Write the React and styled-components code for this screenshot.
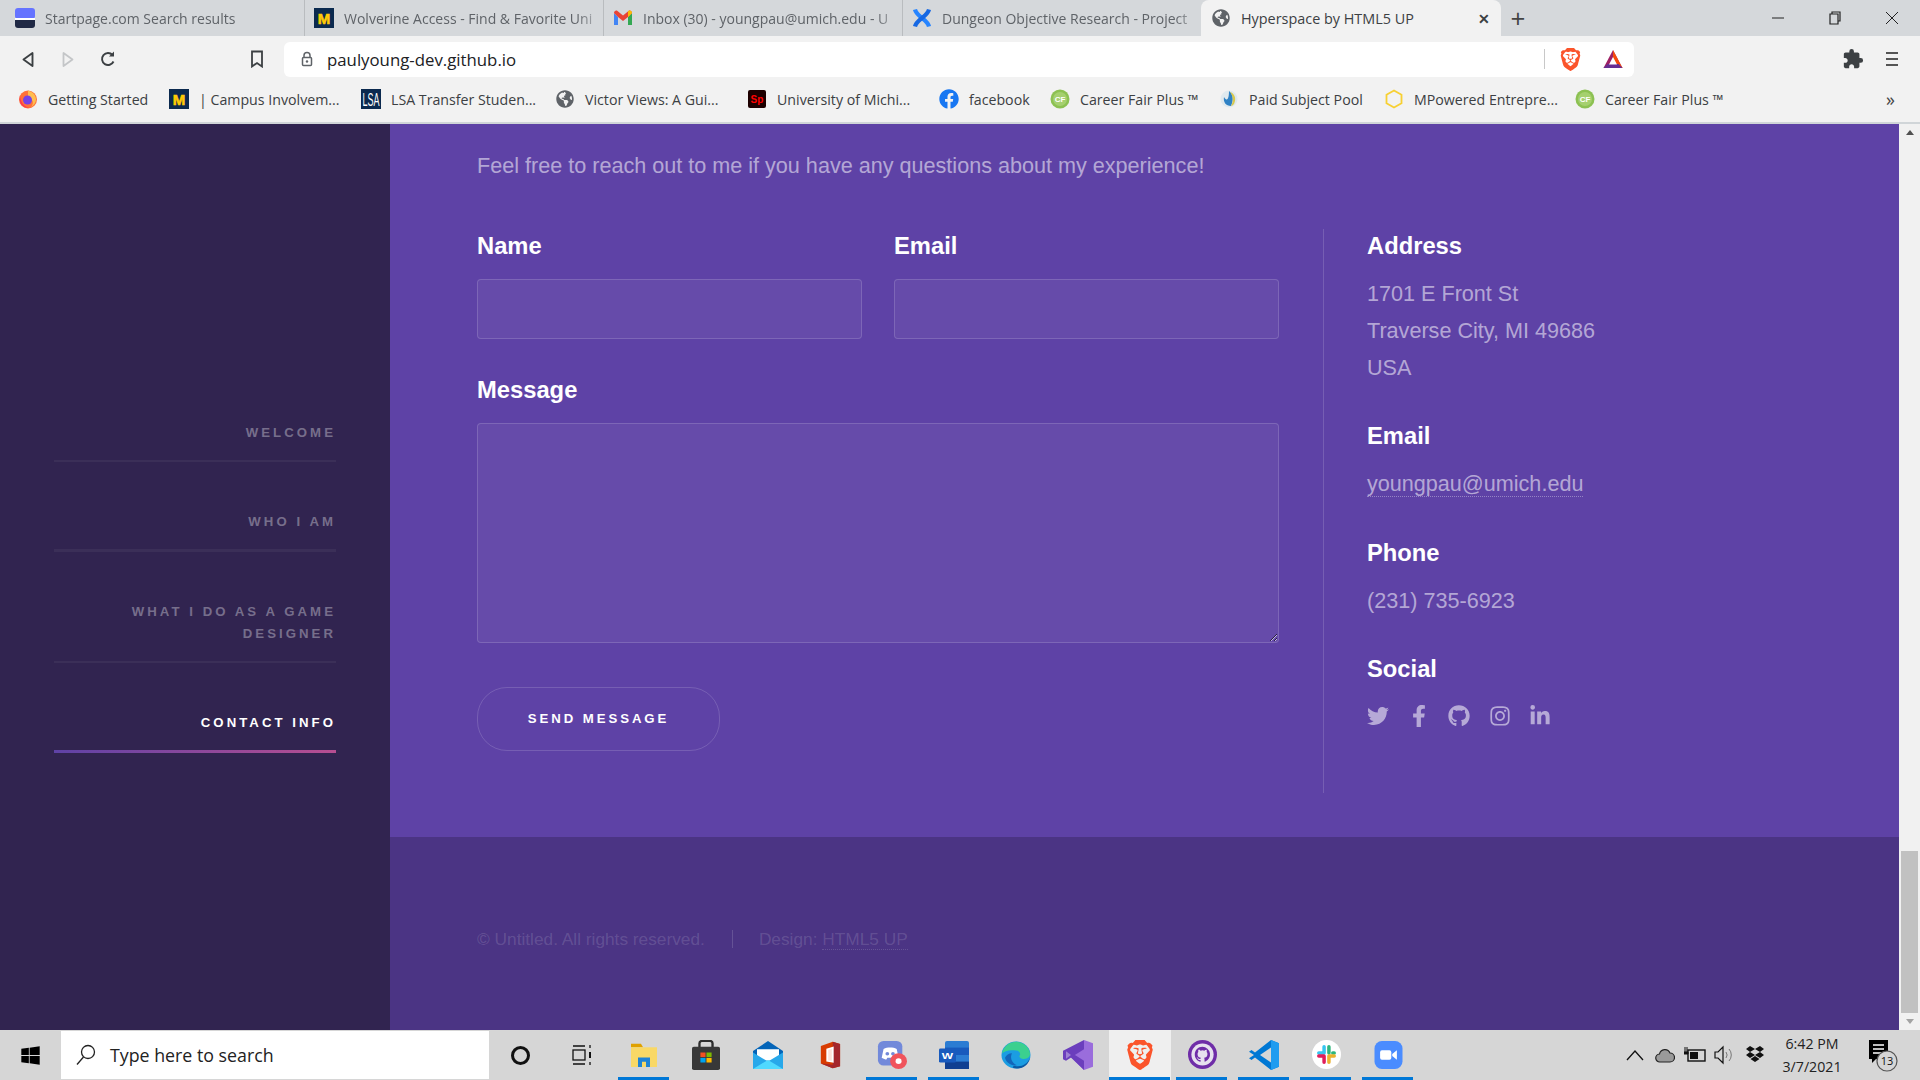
import React from 'react';
import styled, { createGlobalStyle } from 'styled-components';
import {
  FaTwitter,
  FaFacebookF,
  FaGithub,
  FaInstagram,
  FaLinkedinIn,
  FaGlobeAmericas,
  FaFacebook,
  FaWindows,
} from 'react-icons/fa';
import { MdExtension } from 'react-icons/md';
import { SiBrave } from 'react-icons/si';

const UI_FONT = '"Open Sans", "Noto Sans", "Liberation Sans", sans-serif';
const PAGE_FONT = '"Liberation Sans", Arial, sans-serif';

const GlobalStyle = createGlobalStyle`
  html, body {
    margin: 0;
    padding: 0;
    width: 1920px;
    height: 1080px;
    overflow: hidden;
    background: #5e42a6;
    font-family: ${PAGE_FONT};
  }
  * { box-sizing: border-box; }
`;

// favicons and logos
const StartpageIcon = () => (
  <svg width="20" height="20" viewBox="0 0 20 20">
    <rect width="20" height="11" rx="3" fill="#6573ff" />
    <rect y="10" width="20" height="2" fill="#fff" />
    <path d="M0 12h20v5a3 3 0 0 1-3 3H3a3 3 0 0 1-3-3z" fill="#202945" />
  </svg>
);

const MichiganIcon = () => (
  <svg width="20" height="20" viewBox="0 0 20 20">
    <rect width="20" height="20" fill="#0b2a4f" />
    <text x="10" y="15.5" textAnchor="middle" fontFamily="Liberation Sans" fontWeight="700" fontSize="15" stroke="#ffcb05" strokeWidth="0.6" fill="#ffcb05">M</text>
  </svg>
);

const GmailIcon = () => (
  <svg width="20" height="20" viewBox="0 0 20 20">
    <path d="M1 5v12h4V9z" fill="#4285f4" />
    <path d="M15 9v8h4V5z" fill="#34a853" />
    <path d="M1 5c0-2 2-3 3.5-2L10 7.5 15.5 3C17 2 19 3 19 5l-4 4-5 4-5-4z" fill="#ea4335" />
    <path d="M15 9l4-4c0-2-2-3-3.5-2L15 3.5z" fill="#fbbc04" />
  </svg>
);

const ConfluenceIcon = () => (
  <svg width="20" height="20" viewBox="0 0 20 20">
    <g fill="none" strokeWidth="4.2">
      <path d="M3 1.5c1 4 4 6 7 8.500s6 4.5 7 8.5" stroke="#2684ff" />
      <path d="M17 1.5c-1 4-4 6-7 8.500s-6 4.5-7 8.5" stroke="#1668e3" />
    </g>
  </svg>
);

const FirefoxIcon = () => (
  <svg width="20" height="20" viewBox="0 0 20 20">
    <circle cx="10" cy="10.5" r="9" fill="#ff7139" />
    <path d="M10 1.5c4 1 8 4 8 9 0 3-2 6-5 7.5 2-2 2.5-5 1-7-1-1.5-3-2.5-4-4z" fill="#ffbd4f" />
    <circle cx="9.5" cy="11" r="4.5" fill="#7542e5" />
    <path d="M2 6c0 5 3 12 9 12.5-4 1-9-2-9.5-8z" fill="#ff3750" />
  </svg>
);

const LsaIcon = () => (
  <svg width="20" height="20" viewBox="0 0 20 20">
    <rect width="20" height="20" fill="#0b2a4f" />
    <text x="10" y="17" textAnchor="middle" fontFamily="Liberation Sans" fontSize="18" textLength="17" lengthAdjust="spacingAndGlyphs" fill="#fff">LSA</text>
  </svg>
);

const AdobeIcon = () => (
  <svg width="20" height="20" viewBox="0 0 20 20">
    <rect width="18" height="18" x="1" y="1" rx="2" fill="#1d0000" />
    <text x="10" y="14" textAnchor="middle" fontFamily="Liberation Sans" fontWeight="700" fontSize="10" fill="#f00">Sp</text>
  </svg>
);

const CareerIcon = () => (
  <svg width="20" height="20" viewBox="0 0 20 20">
    <circle cx="10" cy="10" r="9.5" fill="#8cc152" />
    <circle cx="10" cy="10" r="7" fill="#a5d06f" />
    <text x="10" y="13" textAnchor="middle" fontFamily="Liberation Sans" fontWeight="700" fontSize="8" fill="#fff">CF</text>
  </svg>
);

const PoolIcon = () => (
  <svg width="20" height="20" viewBox="0 0 20 20">
    <circle cx="10" cy="10" r="8.5" fill="#dfe9ee" />
    <path d="M10 2c4 3 5 8 2 15-5 0-8-4-7-9 2 4 5 4 5-6z" fill="#2f82c5" />
    <path d="M11 3c4 1 7 6 4 12-1 1-2 2-3 2 3-5 2-10-1-14z" fill="#d8c94e" />
  </svg>
);

const HexIcon = () => (
  <svg width="20" height="20" viewBox="0 0 20 20">
    <path d="M10 1.5l7.5 4.3v8.400L10 18.5l-7.5-4.3V5.8z" fill="none" stroke="#f7d033" strokeWidth="1.8" />
  </svg>
);

const BatIcon = () => (
  <svg width="22" height="20" viewBox="0 0 22 20">
    <path d="M11 1l9.5 18H1.5z" fill="#9e1f63" />
    <path d="M11 1l9.5 18h-5L11 9.5z" fill="#ff5000" opacity="0.9" />
    <path d="M1.5 19l4-4h11l4 4z" fill="#662d91" />
    <path d="M11 8l4 7.5H7z" fill="#fff" />
  </svg>
);

const BackIcon = () => (
  <svg width="12" height="17" viewBox="0 0 12 16">
    <path d="M10.5 1.5v13L1.5 8z" fill="none" stroke="#3c4043" strokeWidth="1.9" strokeLinejoin="round" />
  </svg>
);

const ForwardIcon = () => (
  <svg width="12" height="17" viewBox="0 0 12 16">
    <path d="M1.5 1.5v13L10.5 8z" fill="none" stroke="#c4c6c8" strokeWidth="1.8" strokeLinejoin="round" />
  </svg>
);

const ReloadIcon = () => (
  <svg width="18" height="18" viewBox="0 0 18 18">
    <path d="M14.5 11.500A6 6 0 1 1 13.5 5" fill="none" stroke="#3c4043" strokeWidth="1.9" />
    <path d="M15 1.5v5h-5z" fill="#3c4043" />
  </svg>
);

const BookmarkIcon = () => (
  <svg width="14" height="18" viewBox="0 0 14 18">
    <path d="M2 1.5h10v15l-5-3.5-5 3.5z" fill="none" stroke="#3c4043" strokeWidth="1.8" />
  </svg>
);

const LockIcon = () => (
  <svg width="12" height="16" viewBox="0 0 12 16">
    <path d="M3 7V4.5a3 3 0 0 1 6 0V7" fill="none" stroke="#5f6368" strokeWidth="1.5" />
    <rect x="1.5" y="6.5" width="9" height="8" rx="1" fill="none" stroke="#5f6368" strokeWidth="1.5" />
    <circle cx="6" cy="10.5" r="1.2" fill="#5f6368" />
  </svg>
);

const FolderIcon = () => (
  <svg width="28" height="24" viewBox="0 0 28 28" preserveAspectRatio="none">
    <path d="M1 1h10l2 4H1z" fill="#e0a100" />
    <rect x="1" y="5" width="26" height="23" fill="#f9d866" />
    <path d="M8 28v-11h12v11h-4v-6h-4v6z" fill="#1f83d6" />
  </svg>
);

const StoreIcon = () => (
  <svg width="28" height="30" viewBox="0 0 30 36" preserveAspectRatio="none">
    <path d="M8 9V4a3 3 0 0 1 3-3h8a3 3 0 0 1 3 3v5" fill="none" stroke="#2d2d2d" strokeWidth="2.5" />
    <rect y="8" width="30" height="28" rx="2" fill="#383838" />
    <rect x="9" y="15" width="5.5" height="5.5" fill="#f25022" />
    <rect x="15.5" y="15" width="5.5" height="5.5" fill="#7fba00" />
    <rect x="9" y="21.5" width="5.5" height="5.5" fill="#00a4ef" />
    <rect x="15.5" y="21.5" width="5.5" height="5.5" fill="#ffb900" />
  </svg>
);

const MailIcon = () => (
  <svg width="30" height="28" viewBox="0 0 30 34" preserveAspectRatio="none">
    <path d="M15 0l15 12v22H0V12z" fill="#0364b8" />
    <path d="M4 10h22v14H4z" fill="#fff" />
    <path d="M0 14l15 11 15-11v20H0z" fill="#28a8ea" />
    <path d="M0 34l15-11 15 11z" fill="#50d9ff" />
  </svg>
);

const OfficeIcon = () => (
  <svg width="22" height="28" viewBox="0 0 24 36" preserveAspectRatio="none">
    <path d="M15 1L2 6.5v22.500l13 6 8-2.5V4z" fill="#d83b01" />
    <path d="M15 1l8 3v28.500L15 35l-13-6 13 1.5z" fill="#a4262c" />
    <path d="M8 10l8-3v21l-8-1.5z" fill="#fff" />
    <path d="M10 11.5l4-1.5v15.5l-4-.5z" fill="#eb3c00" opacity="0.15" />
  </svg>
);

const WordIcon = () => (
  <svg width="30" height="28" viewBox="0 0 30 34" preserveAspectRatio="none">
    <rect x="6" width="24" height="34" rx="2" fill="#2b7cd3" />
    <rect x="6" y="8" width="24" height="9" fill="#185abd" />
    <rect x="6" y="25" width="24" height="9" fill="#103f91" />
    <rect y="9" width="17" height="17" rx="1.5" fill="#185abd" />
    <text x="8.5" y="22" textAnchor="middle" fontFamily="Liberation Sans" fontWeight="700" fontSize="12" fill="#fff">W</text>
  </svg>
);

const EdgeIcon = () => (
  <svg width="30" height="28" viewBox="0 0 30 30" preserveAspectRatio="none">
    <circle cx="15" cy="15" r="14.5" fill="#1b9de2" />
    <path d="M1 13C3 4 11 0 17 1c7 1 12 7 12 13 0 4-4 6-8 5-3-1-3-3-2-4 1-3-3-6-8-5-5 0-8 2-10 3z" fill="#3bd08f" />
    <path d="M29 18c-1 7-7 12-13 11.5-6 0-4-2-3-3 7 2 13-1 16-8.5z" fill="#0c59a4" />
    <path d="M11 13c-2 4-1 10 5 13-6 1-11-3-12-8 1-3 4-5 7-5z" fill="#1366ba" />
  </svg>
);

const VisualStudioIcon = () => (
  <svg width="30" height="30" viewBox="0 0 30 36" preserveAspectRatio="none">
    <path d="M21 0l9 4v28l-9 4L8 21l13-11z" fill="#9a6ddc" />
    <path d="M21 0v36L8 21l-5 4-3-2V13l3-2 18 14V11L3 25V11z" fill="#6b3ebd" />
    <path d="M3 13.5L8 18l-5 4.5z" fill="#fff" opacity="0.35" />
  </svg>
);

const GithubDesktopIcon = () => (
  <svg width="29" height="29" viewBox="0 0 30 30">
    <circle cx="15" cy="15" r="15" fill="#6f2da8" />
    <circle cx="15" cy="15" r="11.5" fill="#e7e1ef" />
    <path d="M15 7c-4.5 0-8 3.5-8 8 0 3.5 2.3 6.5 5.5 7.6.4 0 .5-.2.5-.4v-1.5c-2.200.5-2.700-1-2.700-1-.4-.9-.9-1.200-.9-1.200-.7-.5 0-.5 0-.5.8 0 1.200.8 1.200.8.700 1.200 1.900.9 2.400.7 0-.5.3-.9.5-1.100-1.800-.2-3.600-.9-3.600-4 0-.9.3-1.600.8-2.100 0-.2-.4-1 .1-2.100 0 0 .7-.2 2.200.8a7.600 7.600 0 0 1 4 0c1.500-1 2.200-.8 2.200-.8.5 1.100.1 1.900.1 2.100.5.5.8 1.200.8 2.100 0 3.100-1.800 3.800-3.600 4 .3.3.6.8.6 1.5v2.200c0 .2.1.5.5.4A8 8 0 0 0 15 7z" fill="#6f2da8" />
  </svg>
);

const VscodeIcon = () => (
  <svg width="30" height="30" viewBox="0 0 30 36" preserveAspectRatio="none">
    <path d="M22 0l8 4v28l-8 4L6 21l-3.5 3L0 22l5-4-5-4 2.5-2L6 15z" fill="#0078d4" />
    <path d="M22 0l8 4v28l-8 4z" fill="#1f9cf0" />
    <path d="M22 9v18l-11-9z" fill="#d6d6d6" />
  </svg>
);

const SlackIcon = () => (
  <svg width="29" height="29" viewBox="0 0 30 30">
    <circle cx="15" cy="15" r="15" fill="#fff" />
    <g strokeWidth="3.6" strokeLinecap="round" fill="none">
      <path d="M12.5 7v6.5M7 13.5h3.5" stroke="#36c5f0" />
      <path d="M17.5 7v6.5M23 13.5h-1.5" stroke="#2eb67d" />
      <path d="M17.5 23v-6.5M23 16.5h-5.5" stroke="#ecb22e" />
      <path d="M12.5 23v-6.5M7 16.5h5.5" stroke="#e01e5a" />
    </g>
  </svg>
);

const ZoomIcon = () => (
  <svg width="29" height="28" viewBox="0 0 30 30">
    <rect width="30" height="30" rx="8" fill="#4a8cff" />
    <rect x="6" y="10" width="12" height="10" rx="2" fill="#fff" />
    <path d="M19 14l5-4v10l-5-4z" fill="#fff" />
  </svg>
);

const TaskViewIcon = () => (
  <svg width="20" height="20" viewBox="0 0 20 20">
    <g stroke="#111" strokeWidth="1.3" fill="none">
      <path d="M1 1h12M1 19h12" />
      <rect x="1" y="5" width="12" height="10" />
      <path d="M18 0v3M18 17v3" />
    </g>
    <path d="M17 7h2v6h-2z" fill="#111" />
  </svg>
);

const CloudIcon = () => (
  <svg width="20" height="18" viewBox="0 0 20 18">
    <path d="M5 16a4 4 0 0 1-.5-8A5.5 5.5 0 0 1 15 7a4.5 4.5 0 0 1 0 9z" fill="#9a9a9a" stroke="#222" strokeWidth="1.2" />
  </svg>
);

const BatteryIcon = () => (
  <svg width="22" height="18" viewBox="0 0 22 18">
    <rect x="4" y="4" width="17" height="11" fill="none" stroke="#111" strokeWidth="1.4" />
    <rect x="6" y="6" width="8" height="7" fill="#111" />
    <path d="M1 1v5M3 1v5M0 6h4v2H0z" stroke="#111" strokeWidth="1" fill="#111" />
  </svg>
);

const SpeakerIcon = () => (
  <svg width="22" height="22" viewBox="0 0 22 22">
    <path d="M1 8h3l5-5v16l-5-5H1z" fill="none" stroke="#111" strokeWidth="1.2" />
    <path d="M12 8a5 5 0 0 1 0 6M15 5a9 9 0 0 1 0 12" fill="none" stroke="#777" strokeWidth="1" />
  </svg>
);

const DropboxIcon = () => (
  <svg width="20" height="20" viewBox="0 0 20 20">
    <path d="M5 1L1 4l4 3 5-3zM15 1l-5 3 5 3 4-3zM5 7L1 10l4 3 5-3zM15 7l-5 3 5 3 4-3zM5.5 14l4.5 3 4.5-3-4.5-3z" fill="#111" />
  </svg>
);

const NotifyIcon = () => (
  <svg width="32" height="36" viewBox="0 0 32 36">
    <path d="M3 3h19v19H10l-4 4v-4H3z" fill="#000" />
    <path d="M7 8h11M7 12h11M7 16h11" stroke="#fff" strokeWidth="1.4" />
    <circle cx="21" cy="24" r="10" fill="#d6d6d6" stroke="#555" strokeWidth="1.2" />
    <text x="21" y="28" textAnchor="middle" fontFamily="Open Sans" fontSize="11" fill="#111">13</text>
  </svg>
);

const DiscordIcon = () => (
  <svg width="30" height="28" viewBox="0 0 32 32" preserveAspectRatio="none">
    <rect x="1" y="0" width="26" height="28" rx="6" fill="#7289da" />
    <path d="M7 9c4-2 10-2 14 0l2 10c-2 1.5-4 2-5 2l-1-2h-6l-1 2c-1 0-3-.5-5-2z" fill="#fff" />
    <circle cx="11" cy="14.5" r="2" fill="#7289da" />
    <circle cx="17" cy="14.5" r="2" fill="#7289da" />
    <circle cx="23" cy="23" r="9" fill="#f0545c" />
    <circle cx="23" cy="23" r="3.2" fill="#fff" />
  </svg>
);

// data
const TABS = [
  { title: 'Startpage.com Search results', icon: <StartpageIcon /> },
  { title: 'Wolverine Access - Find & Favorite Uni', icon: <MichiganIcon /> },
  { title: 'Inbox (30) - youngpau@umich.edu - U', icon: <GmailIcon /> },
  { title: 'Dungeon Objective Research - Project', icon: <ConfluenceIcon /> },
];

const BOOKMARKS = [
  { label: 'Getting Started', w: 151, icon: <FirefoxIcon /> },
  { label: '| Campus Involvem...', w: 192, icon: <MichiganIcon /> },
  { label: 'LSA Transfer Studen...', w: 194, icon: <LsaIcon /> },
  { label: 'Victor Views: A Gui...', w: 192, icon: <FaGlobeAmericas size={18} color="#5f6368" /> },
  { label: 'University of Michi...', w: 192, icon: <AdobeIcon /> },
  { label: 'facebook', w: 111, icon: <FaFacebook size={20} color="#1877f2" /> },
  { label: 'Career Fair Plus ™', w: 169, icon: <CareerIcon /> },
  { label: 'Paid Subject Pool', w: 165, icon: <PoolIcon /> },
  { label: 'MPowered Entrepre...', w: 191, icon: <HexIcon /> },
  { label: 'Career Fair Plus ™', w: 200, icon: <CareerIcon /> },
];

const NAV_ITEMS = [
  { label: 'Welcome' },
  { label: 'Who I am', thick: true },
  { label: 'What I do as a game designer' },
  { label: 'Contact Info', active: true },
];

const APPS = [
  { icon: <FolderIcon />, open: true },
  { icon: <StoreIcon /> },
  { icon: <MailIcon /> },
  { icon: <OfficeIcon /> },
  { icon: <DiscordIcon />, open: true },
  { icon: <WordIcon />, open: true },
  { icon: <EdgeIcon /> },
  { icon: <VisualStudioIcon /> },
  { icon: <SiBrave size={30} color="#fb542b" />, open: true, active: true },
  { icon: <GithubDesktopIcon />, open: true },
  { icon: <VscodeIcon />, open: true },
  { icon: <SlackIcon />, open: true },
  { icon: <ZoomIcon />, open: true },
];

// App Component
const App = () => {
  return (
    <>
      <GlobalStyle />
      <Screen>
        <TabStrip>
          {TABS.map((tab) => (
            <Tab key={tab.title}>
              <TabIcon>{tab.icon}</TabIcon>
              <TabTitle>{tab.title}</TabTitle>
            </Tab>
          ))}
          <ActiveTab>
            <TabIcon>
              <FaGlobeAmericas size={18} color="#5f6368" />
            </TabIcon>
            <ActiveTitle>Hyperspace by HTML5 UP</ActiveTitle>
            <TabClose>✕</TabClose>
          </ActiveTab>
          <NewTab>+</NewTab>
          <WindowControls>
            <WindowButton>
              <svg width="14" height="14" viewBox="0 0 14 14">
                <path d="M1 7h12" stroke="#222" strokeWidth="1" />
              </svg>
            </WindowButton>
            <WindowButton>
              <svg width="14" height="14" viewBox="0 0 14 14">
                <path d="M4 3V1h8v9h-2M2 3h8v10H2z" fill="none" stroke="#222" strokeWidth="1.2" />
              </svg>
            </WindowButton>
            <WindowButton>
              <svg width="14" height="14" viewBox="0 0 14 14">
                <path d="M1 1l12 12M13 1L1 13" stroke="#222" strokeWidth="1" />
              </svg>
            </WindowButton>
          </WindowControls>
        </TabStrip>

        <Toolbar>
          <ToolButton><BackIcon /></ToolButton>
          <ToolButton><ForwardIcon /></ToolButton>
          <ToolButton><ReloadIcon /></ToolButton>
          <BookmarkButton><BookmarkIcon /></BookmarkButton>
          <Omnibox>
            <LockIcon />
            <Url>paulyoung-dev.github.io</Url>
            <OmniDivider />
            <SiBrave size={23} color="#fb542b" />
            <BatSlot><BatIcon /></BatSlot>
          </Omnibox>
          <ToolEnd>
            <ToolButton><MdExtension size={22} color="#3c4043" /></ToolButton>
            <ToolButton>
              <svg width="14" height="16" viewBox="0 0 14 16">
                <path d="M1 2h12M1 8h12M1 14h12" stroke="#555" strokeWidth="2" />
              </svg>
            </ToolButton>
          </ToolEnd>
        </Toolbar>

        <BookmarkBar>
          {BOOKMARKS.map((item, i) => (
            <Bookmark key={i} $w={item.w}>
              <BookmarkGlyph>{item.icon}</BookmarkGlyph>
              <span>{item.label}</span>
            </Bookmark>
          ))}
          <MoreBookmarks>»</MoreBookmarks>
        </BookmarkBar>

        <Page>
          <Sidebar>
            <Nav>
              {NAV_ITEMS.map((item) => (
                <NavItem key={item.label} $active={item.active} $thick={item.thick}>
                  {item.label}
                </NavItem>
              ))}
            </Nav>
          </Sidebar>

          <Main>
            <Contact>
              <Intro>Feel free to reach out to me if you have any questions about my experience!</Intro>
              <Split>
                <Form>
                  <Fields>
                    <Field>
                      <Label>Name</Label>
                      <Input type="text" />
                    </Field>
                    <Field>
                      <Label>Email</Label>
                      <Input type="text" />
                    </Field>
                    <WideField>
                      <Label>Message</Label>
                      <TextArea />
                    </WideField>
                  </Fields>
                  <SendButton type="button">Send Message</SendButton>
                </Form>
                <Info>
                  <InfoBlock>
                    <Label>Address</Label>
                    <InfoText>
                      1701 E Front St
                      <br />
                      Traverse City, MI 49686
                      <br />
                      USA
                    </InfoText>
                  </InfoBlock>
                  <InfoBlock>
                    <Label>Email</Label>
                    <InfoText>
                      <DottedLink href="#">youngpau@umich.edu</DottedLink>
                    </InfoText>
                  </InfoBlock>
                  <InfoBlock>
                    <Label>Phone</Label>
                    <InfoText>(231) 735-6923</InfoText>
                  </InfoBlock>
                  <InfoBlock>
                    <Label>Social</Label>
                    <Socials>
                      <FaTwitter />
                      <FaFacebookF />
                      <FaGithub />
                      <FaInstagram />
                      <FaLinkedinIn />
                    </Socials>
                  </InfoBlock>
                </Info>
              </Split>
            </Contact>
            <Footer>
              <Copyright>© Untitled. All rights reserved.</Copyright>
              <Credit>
                Design: <FooterLink href="#">HTML5 UP</FooterLink>
              </Credit>
            </Footer>
          </Main>

          <Scrollbar>
            <ScrollArrow $up />
            <ScrollTrack>
              <ScrollThumb />
            </ScrollTrack>
            <ScrollArrow />
          </Scrollbar>
        </Page>

        <Taskbar>
          <StartButton>
            <FaWindows size={21} color="#000" />
          </StartButton>
          <SearchBox>
            <svg width="20" height="22" viewBox="0 0 20 22">
              <circle cx="12" cy="8" r="6.5" fill="none" stroke="#222" strokeWidth="1.3" />
              <path d="M7.5 13L1 20.5" stroke="#222" strokeWidth="1.3" />
            </svg>
            <SearchText>Type here to search</SearchText>
          </SearchBox>
          <SystemCell>
            <CortanaRing />
          </SystemCell>
          <SystemCell>
            <TaskViewIcon />
          </SystemCell>
          {APPS.map((app, i) => (
            <AppCell key={i} $active={app.active} $open={app.open}>
              {app.icon}
            </AppCell>
          ))}
          <Tray>
            <TrayCell>
              <svg width="18" height="12" viewBox="0 0 18 12">
                <path d="M1 11l8-9 8 9" fill="none" stroke="#111" strokeWidth="1.3" />
              </svg>
            </TrayCell>
            <TrayCell><CloudIcon /></TrayCell>
            <TrayCell><BatteryIcon /></TrayCell>
            <TrayCell><SpeakerIcon /></TrayCell>
            <TrayCell><DropboxIcon /></TrayCell>
            <Clock>
              <span>6:42 PM</span>
              <span>3/7/2021</span>
            </Clock>
            <Notify><NotifyIcon /></Notify>
          </Tray>
        </Taskbar>
      </Screen>
    </>
  );
};

// browser chrome
const Screen = styled.div`
  width: 1920px;
  height: 1080px;
  display: flex;
  flex-direction: column;
  overflow: hidden;
`;

const TabStrip = styled.div`
  height: 36px;
  flex: none;
  display: flex;
  padding-left: 6px;
  background: #d5d8db;
  font-family: ${UI_FONT};
`;

const Tab = styled.div`
  width: 299px;
  height: 36px;
  padding: 0 0 0 9px;
  display: flex;
  align-items: center;
  gap: 10px;
  border-right: 1px solid #b9bcbf;

  &:nth-child(4) {
    width: 298px;
    border-right: 0;
  }
`;

const TabIcon = styled.span`
  width: 20px;
  height: 20px;
  flex: none;
  display: flex;
  align-items: center;
  justify-content: center;
`;

const TabTitle = styled.span`
  flex: 1;
  overflow: hidden;
  white-space: nowrap;
  font-size: 14px;
  color: #5f6368;
  margin-right: 6px;
  -webkit-mask-image: linear-gradient(to right, #000 92%, rgba(0, 0, 0, 0.3));
  mask-image: linear-gradient(to right, #000 92%, rgba(0, 0, 0, 0.3));
`;

const ActiveTab = styled.div`
  width: 300px;
  height: 36px;
  padding-left: 10px;
  display: flex;
  align-items: center;
  gap: 10px;
  background: #f2f2f2;
  border-radius: 8px 8px 0 0;
`;

const ActiveTitle = styled.span`
  flex: 1;
  font-size: 14.4px;
  white-space: nowrap;
  color: #3c4043;
`;

const TabClose = styled.span`
  width: 23px;
  font-size: 14px;
  font-weight: 700;
  color: #3c4043;
`;

const NewTab = styled.span`
  width: 34px;
  text-align: center;
  font-size: 26px;
  line-height: 36px;
  color: #444;
`;

const WindowControls = styled.div`
  margin-left: auto;
  display: flex;
`;

const WindowButton = styled.span`
  width: 57px;
  display: flex;
  align-items: center;
  justify-content: center;
`;

const Toolbar = styled.div`
  height: 46px;
  flex: none;
  display: flex;
  align-items: center;
  padding: 0 8px 0 8px;
  background: #f2f2f2;
`;

const ToolButton = styled.span`
  width: 40px;
  height: 35px;
  display: flex;
  align-items: center;
  justify-content: center;
`;

const BookmarkButton = styled(ToolButton)`
  margin-left: 109px;
`;

const Omnibox = styled.div`
  width: 1350px;
  height: 35px;
  margin-left: 7px;
  padding: 0 10px 0 17px;
  display: flex;
  align-items: center;
  background: #fff;
  border-radius: 6px;
`;

const Url = styled.span`
  margin-left: 14px;
  flex: 1;
  font-family: ${UI_FONT};
  font-size: 16.8px;
  color: #202124;
`;

const OmniDivider = styled.span`
  width: 1px;
  height: 20px;
  margin-right: 14px;
  background: #c8c8c8;
`;

const BatSlot = styled.span`
  display: flex;
  margin-left: 20px;
`;

const ToolEnd = styled.div`
  margin-left: auto;
  display: flex;
  gap: 0;

  span:first-child {
    width: 38px;
  }
`;

const BookmarkBar = styled.div`
  height: 42px;
  flex: none;
  display: flex;
  align-items: center;
  padding: 0 0 6px 18px;
  background: #f2f2f2;
  border-bottom: 2px solid #d0d5d8;
  font-family: ${UI_FONT};
  font-size: 14.2px;
  color: #3c4043;
`;

const Bookmark = styled.div`
  width: ${({ $w }) => $w}px;
  flex: none;
  display: flex;
  align-items: center;
  gap: 10px;
  white-space: nowrap;
`;

const BookmarkGlyph = styled.span`
  width: 20px;
  height: 20px;
  display: flex;
  align-items: center;
  justify-content: center;
`;

const MoreBookmarks = styled.span`
  margin-left: 111px;
  font-size: 18px;
  line-height: 18px;
  color: #444;
`;

// page
const Page = styled.div`
  flex: 1;
  min-height: 0;
  display: flex;
  font-family: ${PAGE_FONT};
`;

const Sidebar = styled.aside`
  width: 390px;
  flex: none;
  padding: 298px 54px 0 54px;
  background: #312450;
`;

const Nav = styled.nav`
  display: flex;
  flex-direction: column;
  gap: 49px;
`;

const NavItem = styled.a`
  display: block;
  padding-bottom: 16px;
  text-align: right;
  font-size: 13.2px;
  font-weight: 700;
  line-height: 22px;
  letter-spacing: 3.05px;
  text-transform: uppercase;
  color: ${({ $active }) => ($active ? '#ffffff' : 'rgba(255, 255, 255, 0.35)')};
  border-bottom: ${({ $active, $thick }) => ($active || $thick ? 3 : 2)}px solid rgba(255, 255, 255, 0.05);
  ${({ $active }) =>
    $active &&
    `border-image: linear-gradient(to right, #5e42a6, #b74e91) 1;`}
`;

const Main = styled.main`
  flex: 1;
  min-width: 0;
  display: flex;
  flex-direction: column;
`;

const Contact = styled.section`
  height: 713px;
  flex: none;
  padding: 23px 0 0 87px;
  background: #5e42a6;
  color: rgba(255, 255, 255, 0.55);
  font-size: 21.6px;
  line-height: 37px;
`;

const Intro = styled.p`
  margin: 0 0 45px;
`;

const Split = styled.div`
  display: flex;
  height: 564px;
`;

const Form = styled.form`
  width: 802px;
  flex: none;
  margin-right: 44px;
`;

const Fields = styled.div`
  display: grid;
  grid-template-columns: 385px 385px;
  column-gap: 32px;
  row-gap: 34px;
`;

const Field = styled.div`
  display: flex;
  flex-direction: column;
`;

const WideField = styled(Field)`
  grid-column: 1 / -1;
`;

const Label = styled.h3`
  margin: 2px 0 18px;
  font-size: 23.76px;
  font-weight: 700;
  line-height: 30px;
  color: #ffffff;
`;

const Input = styled.input`
  width: 100%;
  height: 60px;
  padding: 0 16px;
  background: rgba(255, 255, 255, 0.05);
  border: 1px solid rgba(255, 255, 255, 0.15);
  border-radius: 4px;
  outline: 0;
`;

const TextArea = styled.textarea`
  display: block;
  width: 100%;
  height: 220px;
  padding: 16px;
  background: rgba(255, 255, 255, 0.05);
  border: 1px solid rgba(255, 255, 255, 0.15);
  border-radius: 4px;
  outline: 0;
`;

const SendButton = styled.button`
  display: block;
  width: 243px;
  height: 64px;
  margin-top: 44px;
  padding: 0 0 2px;
  background: transparent;
  border: 1px solid rgba(255, 255, 255, 0.15);
  border-radius: 30px;
  color: #ffffff;
  font-family: ${PAGE_FONT};
  font-size: 13.2px;
  font-weight: 700;
  letter-spacing: 2.95px;
  text-transform: uppercase;
`;

const Info = styled.div`
  padding-left: 43px;
  border-left: 1px solid rgba(255, 255, 255, 0.15);
`;

const InfoBlock = styled.div`
  margin-bottom: 35.4px;

  h3 {
    margin-bottom: 14px;
  }
`;

const InfoText = styled.p`
  margin: 0;
`;

const DottedLink = styled.a`
  color: inherit;
  text-decoration: none;
  border-bottom: 1px dotted rgba(255, 255, 255, 0.35);
`;

const Socials = styled.div`
  display: flex;
  gap: 18.5px;
  margin-top: 21px;
  font-size: 22px;
  line-height: 22px;
`;

const Footer = styled.footer`
  flex: 1;
  display: flex;
  align-items: center;
  padding: 11px 0 0 87px;
  background: #4b3484;
  color: rgba(255, 255, 255, 0.15);
  font-size: 17.3px;
`;

const Copyright = styled.span`
  padding-right: 27px;
  border-right: 1px solid rgba(255, 255, 255, 0.15);
  line-height: 18px;
`;

const Credit = styled.span`
  padding-left: 26px;
`;

const FooterLink = styled.a`
  color: inherit;
  text-decoration: none;
  border-bottom: 1px dotted rgba(255, 255, 255, 0.15);
`;

const Scrollbar = styled.div`
  width: 21px;
  flex: none;
  display: flex;
  flex-direction: column;
  background: #f1f1f1;
`;

const ScrollArrow = styled.span`
  height: 17px;
  flex: none;
  display: flex;
  align-items: center;
  justify-content: center;

  &::before {
    content: '';
    width: 0;
    height: 0;
    border-left: 4.5px solid transparent;
    border-right: 4.5px solid transparent;
    ${({ $up }) =>
      $up ? 'border-bottom: 5px solid #505050;' : 'border-top: 5px solid #a3a3a3;'}
  }
`;

const ScrollTrack = styled.div`
  flex: 1;
  display: flex;
  flex-direction: column;
  justify-content: flex-end;
  padding-left: 2px;
`;

const ScrollThumb = styled.div`
  width: 17px;
  height: 162px;
  background: #c1c1c1;
`;

// windows taskbar
const Taskbar = styled.div`
  height: 50px;
  flex: none;
  display: flex;
  background: #d6d6d6;
  font-family: ${UI_FONT};
`;

const StartButton = styled.div`
  width: 61px;
  flex: none;
  display: flex;
  align-items: center;
  justify-content: center;
  padding-right: 1px;
`;

const SearchBox = styled.div`
  width: 428px;
  flex: none;
  margin: 1px 0;
  padding-left: 15px;
  display: flex;
  align-items: center;
  gap: 14px;
  background: #fff;
`;

const SearchText = styled.span`
  font-size: 17.8px;
  color: #222;
`;

const SystemCell = styled.div`
  width: 62px;
  flex: none;
  display: flex;
  align-items: center;
  justify-content: center;
`;

const CortanaRing = styled.span`
  width: 19px;
  height: 19px;
  border: 3px solid #111;
  border-radius: 50%;
`;

const AppCell = styled.div`
  position: relative;
  width: 62px;
  flex: none;
  display: flex;
  align-items: center;
  justify-content: center;
  padding-bottom: 1px;
  background: ${({ $active }) => ($active ? '#efefef' : 'transparent')};

  &::after {
    content: '';
    display: ${({ $open }) => ($open ? 'block' : 'none')};
    position: absolute;
    bottom: 0;
    left: ${({ $active }) => ($active ? 0 : '5px')};
    right: ${({ $active }) => ($active ? '1px' : '6px')};
    height: 3px;
    background: #0078d7;
  }
`;

const Tray = styled.div`
  margin-left: auto;
  display: flex;
  padding-right: 22px;
`;

const TrayCell = styled.div`
  width: 30px;
  display: flex;
  align-items: center;
  justify-content: center;
`;

const Clock = styled.div`
  width: 84px;
  display: flex;
  flex-direction: column;
  align-items: center;
  justify-content: center;
  gap: 5px;
  font-size: 14.2px;
  line-height: 18px;
  color: #222;
`;

const Notify = styled.div`
  width: 44px;
  display: flex;
  align-items: center;
  justify-content: flex-end;
`;

export default App;
